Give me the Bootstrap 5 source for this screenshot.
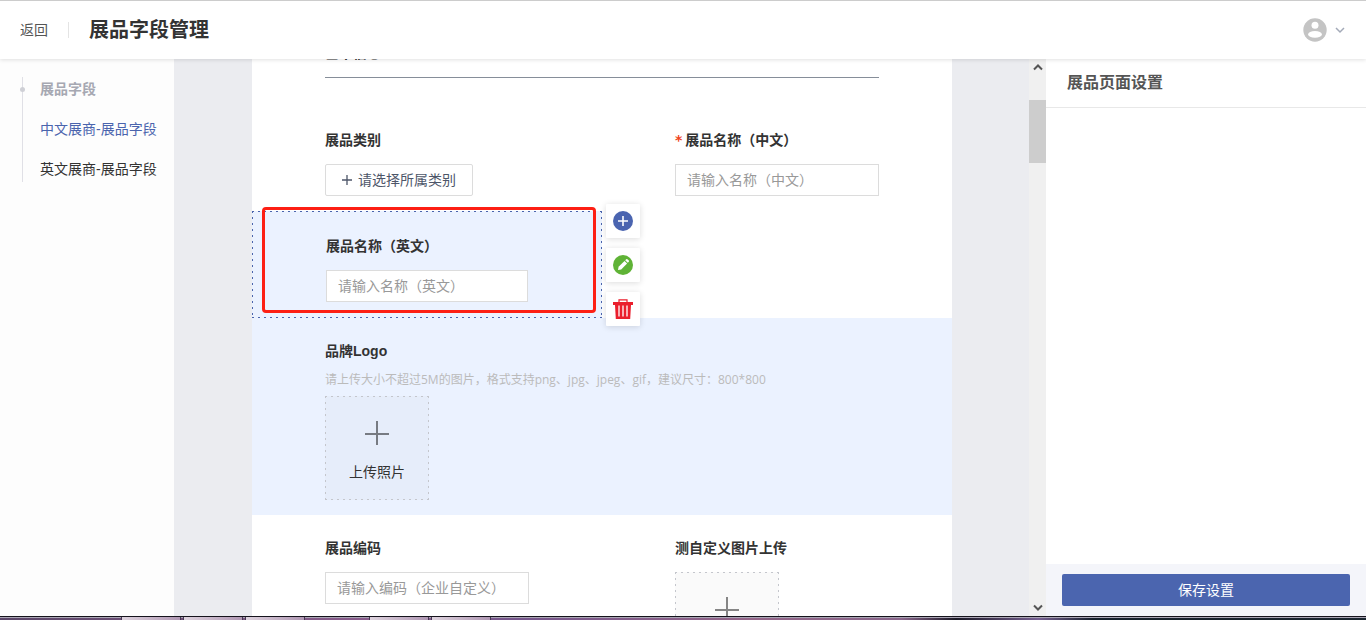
<!DOCTYPE html>
<html lang="zh-CN">
<head>
<meta charset="utf-8">
<meta name="viewport" content="width=device-width, initial-scale=1">
<title>展品字段管理</title>
<link href="https://cdn.jsdelivr.net/npm/bootstrap@5.3.0/dist/css/bootstrap.min.css" rel="stylesheet">
<style>
  body { font-family: "Liberation Sans", "Noto Sans CJK SC", sans-serif; font-size: 14px; line-height: 22px; color: #333; }
  a { text-decoration: none; }
  .topbar { height: 59px; border-top: 1px solid #ccc; box-shadow: 0 1px 4px rgba(0,0,0,.12); z-index: 10; padding: 0 21px 0 16px; }
  .topbar .back { color: #555; border-right: 1px solid #e4e4e4; line-height: 16px; padding-right: 20px; margin-right: 20px; }
  .topbar h1 { font-size: 20px; line-height: 24px; font-weight: 700; }
  .user-menu { gap: 8px; }
  .side { width: 174px; background: #fdfdfd; padding: 18px 0 0 22px; }
  .side-nav { border-left: 1px solid #e0e0e6; height: 105px; padding: 1px 0 0 17px; gap: 18px; }
  .side-nav .nav-title { color: #a6a8b2; font-weight: 700; }
  .side-nav .nav-title::before { content: ""; position: absolute; left: -20px; top: 9px; width: 5px; height: 5px; border-radius: 50%; background: #cfd0d6; }
  .side-nav a { color: #333; }
  .side-nav a.active { color: #4a64ad; }
  .stage { background: #ebecf0; padding-left: 1px; }
  .sheet { width: 700px; margin-top: -17px; }
  .sheet-head { margin: 0 73px 28px; padding-bottom: 13px; border-bottom: 1px solid #868e99; font-weight: 700; }
  .cell { padding: 23px 73px 15px; }
  .cell label, .cell .cell-label { display: block; font-weight: 700; margin-bottom: 13px; }
  .cell .form-control, .pick { height: 32px; font-size: 14px; line-height: 20px; border: 1px solid #dcdcdc; border-radius: 0; }
  .cell .form-control { padding: 5px 11px; }
  .cell .form-control::placeholder { color: #999; }
  .pick { width: 148px; background: #fff; color: #4d5669; padding: 0; gap: 6px; border-radius: 2px; }
  .must { color: #f04420; margin-right: 3px; font-family: "DejaVu Sans", sans-serif; line-height: 16px; }
  .dashed {
    --dash: #c4c6cc;
    border: 1px solid transparent;
    background:
      repeating-linear-gradient(90deg, var(--dash) 0 2px, transparent 2px 6px) top / 100% 1px no-repeat border-box,
      repeating-linear-gradient(90deg, var(--dash) 0 2px, transparent 2px 6px) bottom / 100% 1px no-repeat border-box,
      repeating-linear-gradient(var(--dash) 0 2px, transparent 2px 6px) left / 1px 100% no-repeat border-box,
      repeating-linear-gradient(var(--dash) 0 2px, transparent 2px 6px) right / 1px 100% no-repeat border-box,
      var(--fill);
  }
  .picked { --dash: #4a64ad; --fill: #ebf2ff; }
  .marker { position: absolute; inset: -5px 5px 4px 9px; border: 3px solid #fd1f14; border-radius: 4px; pointer-events: none; }
  .tools { position: absolute; left: 353px; top: -8px; gap: 10px; z-index: 2; }
  .tools button { width: 34px; height: 34px; padding: 7px; border: 0; background: #fff; box-shadow: 0 1px 6px rgba(0,0,0,.14); border-radius: 1px; }
  .tools svg { display: block; }
  .brand { background: #ebf2ff; padding-top: 22px; }
  .brand .cell-label { margin-bottom: 8px; }
  .hint { font-family: "Open Sans", "Noto Sans CJK SC", sans-serif; font-size: 12px; line-height: 20px; color: #bbb; margin-bottom: 6px; }
  .upload { --fill: rgba(0,0,0,.02); width: 104px; height: 104px; padding: 24px 0 0; gap: 16px; color: #333; font-size: 14px; line-height: 22px; }
  .last .cell { padding-top: 22px; }
  .track { width: 17px; background: #f0f0f0; padding: 4px 0; }
  .thumb { height: 63px; background: #cdcdcd; margin-top: 29px; }
  .panel { width: 320px; }
  .panel h2 { font-size: 16px; line-height: 24px; font-weight: 700; color: #555; padding: 12px 21px; border-bottom: 1px solid #e8e8e8; }
  .panel-foot { background: #f4f5fa; padding: 10px 16px; }
  .save { height: 32px; padding: 0; font-size: 14px; border: 0; border-radius: 2px; background: #4b65af; color: #fff; }
  .taskbar { height: 4px; border-top: 1px solid #15131c; padding-left: 121px; gap: 2px; background: linear-gradient(#aaa5b4 0 1px, transparent 1px), linear-gradient(90deg, #5a4668, #8a5c8c 27%, #75558b 38%, #946588 55%, #8a668b 66%, #1a1825 70%, #765f91 76%, #17202c 80%, #1b2630); }
  .taskbar span { width: 60px; border: 1px solid #453952; border-width: 0 1px; background: linear-gradient(90deg, #ded3de, #b097b3); }
  .taskbar span.apart { margin-left: 62px; }
</style>
</head>
<body class="vh-100 d-flex flex-column overflow-hidden bg-white">

<header class="topbar position-relative flex-shrink-0 d-flex align-items-center bg-white">
  <a href="#" class="back ms-1">返回</a>
  <h1 class="mb-0">展品字段管理</h1>
  <button class="user-menu btn border-0 p-0 ms-auto d-flex align-items-center" type="button" aria-label="用户菜单">
    <svg width="24" height="24" viewBox="0 0 24 24"><circle cx="12" cy="12" r="11.7" fill="#c4c4c4"/><circle cx="12" cy="7.3" r="3.5" fill="#fff"/><ellipse cx="12" cy="16.4" rx="6.9" ry="3.3" fill="#fff"/></svg>
    <svg width="10" height="8" viewBox="0 0 10 8"><path d="M1 2l4 4 4-4" fill="none" stroke="#a3aab8" stroke-width="1.5"/></svg>
  </button>
</header>

<div class="d-flex flex-grow-1 overflow-hidden">
  <nav class="side flex-shrink-0">
    <div class="side-nav d-flex flex-column">
      <span class="nav-title position-relative">展品字段</span>
      <a href="#" class="active">中文展商-展品字段</a>
      <a href="#">英文展商-展品字段</a>
    </div>
  </nav>

  <main class="stage flex-grow-1 overflow-hidden">
    <form class="sheet mx-auto bg-white">
      <div class="sheet-head">基本信息</div>

      <div class="row g-0">
        <div class="col-6 cell">
          <span class="cell-label">展品类别</span>
          <button type="button" class="pick btn d-flex align-items-center justify-content-center">
            <svg width="10" height="10" viewBox="0 0 10 10"><path d="M5 0v10M0 5h10" stroke="#4d5669" stroke-width="1.3"/></svg>请选择所属类别
          </button>
        </div>
        <div class="col-6 cell">
          <label for="nameZh"><span class="must">*</span>展品名称（中文）</label>
          <input id="nameZh" class="form-control" type="text" placeholder="请输入名称（中文）">
        </div>
      </div>

      <div class="row g-0">
        <div class="col-6 cell picked dashed position-relative">
          <label for="nameEn">展品名称（英文）</label>
          <input id="nameEn" class="form-control" type="text" placeholder="请输入名称（英文）">
          <div class="marker"></div>
          <div class="tools d-flex flex-column">
            <button type="button" aria-label="添加"><svg width="20" height="20" viewBox="0 0 20 20"><circle cx="10" cy="10" r="10" fill="#4a64b0"/><path d="M10 5v10M5 10h10" stroke="#fff" stroke-width="1.6"/></svg></button>
            <button type="button" aria-label="编辑"><svg width="20" height="20" viewBox="0 0 20 20"><circle cx="10" cy="10" r="10" fill="#5fb336"/><path d="M5 15l.6-3.2 5.9-5.9 2.6 2.6-5.900 5.900z" fill="#fff"/><path d="M12.200 5.200l1-1q.6-.5 1.200 0l1.400 1.400q.5.600 0 1.200l-1 1z" fill="#fff"/></svg></button>
            <button type="button" aria-label="删除"><svg width="20" height="20" viewBox="0 0 20 20"><path d="M6 3.500V.8h8v2.700" fill="none" stroke="#ea1f2d" stroke-width="1.200"/><path d="M0 3h20v3h-2l-.8 14H2.800L2 6H0z" fill="#ea1f2d"/><path d="M6 6.500v11M10 6.500v11M14 6.500v11" stroke="#fff" stroke-width="1.300"/></svg></button>
          </div>
        </div>
      </div>

      <div class="cell brand">
        <span class="cell-label">品牌Logo</span>
        <p class="hint">请上传大小不超过5M的图片，格式支持png、jpg、jpeg、gif，建议尺寸：800*800</p>
        <button type="button" class="upload dashed btn rounded-0 d-flex flex-column align-items-center">
          <svg width="24" height="24" viewBox="0 0 24 24"><path d="M12 0v24M0 13h24" stroke="#777b82" stroke-width="2"/></svg>
          <span>上传照片</span>
        </button>
      </div>

      <div class="row g-0 last">
        <div class="col-6 cell">
          <label for="code">展品编码</label>
          <input id="code" class="form-control" type="text" placeholder="请输入编码（企业自定义）">
        </div>
        <div class="col-6 cell">
          <span class="cell-label">测自定义图片上传</span>
          <button type="button" class="upload dashed btn rounded-0 d-flex flex-column align-items-center" aria-label="上传图片">
            <svg width="24" height="24" viewBox="0 0 24 24"><path d="M12 0v24M0 13h24" stroke="#858585" stroke-width="2"/></svg>
          </button>
        </div>
      </div>
    </form>
  </main>

  <div class="track flex-shrink-0 d-flex flex-column align-items-center">
    <svg width="10" height="8" viewBox="0 0 10 8"><path d="M1 6.500l4-4 4 4" fill="none" stroke="#555" stroke-width="2"/></svg>
    <div class="thumb w-100"></div>
    <svg class="mt-auto" width="10" height="8" viewBox="0 0 10 8"><path d="M1 1.500l4 4 4-4" fill="none" stroke="#555" stroke-width="2"/></svg>
  </div>

  <aside class="panel flex-shrink-0 d-flex flex-column bg-white">
    <h2 class="mb-0">展品页面设置</h2>
    <div class="panel-foot mt-auto"><button type="button" class="save btn w-100">保存设置</button></div>
  </aside>
</div>

<footer class="taskbar d-flex flex-shrink-0">
  <span></span><span></span><span></span><span class="apart"></span><span></span>
</footer>

<script src="https://cdn.jsdelivr.net/npm/bootstrap@5.3.0/dist/js/bootstrap.bundle.min.js"></script>
</body>
</html>
